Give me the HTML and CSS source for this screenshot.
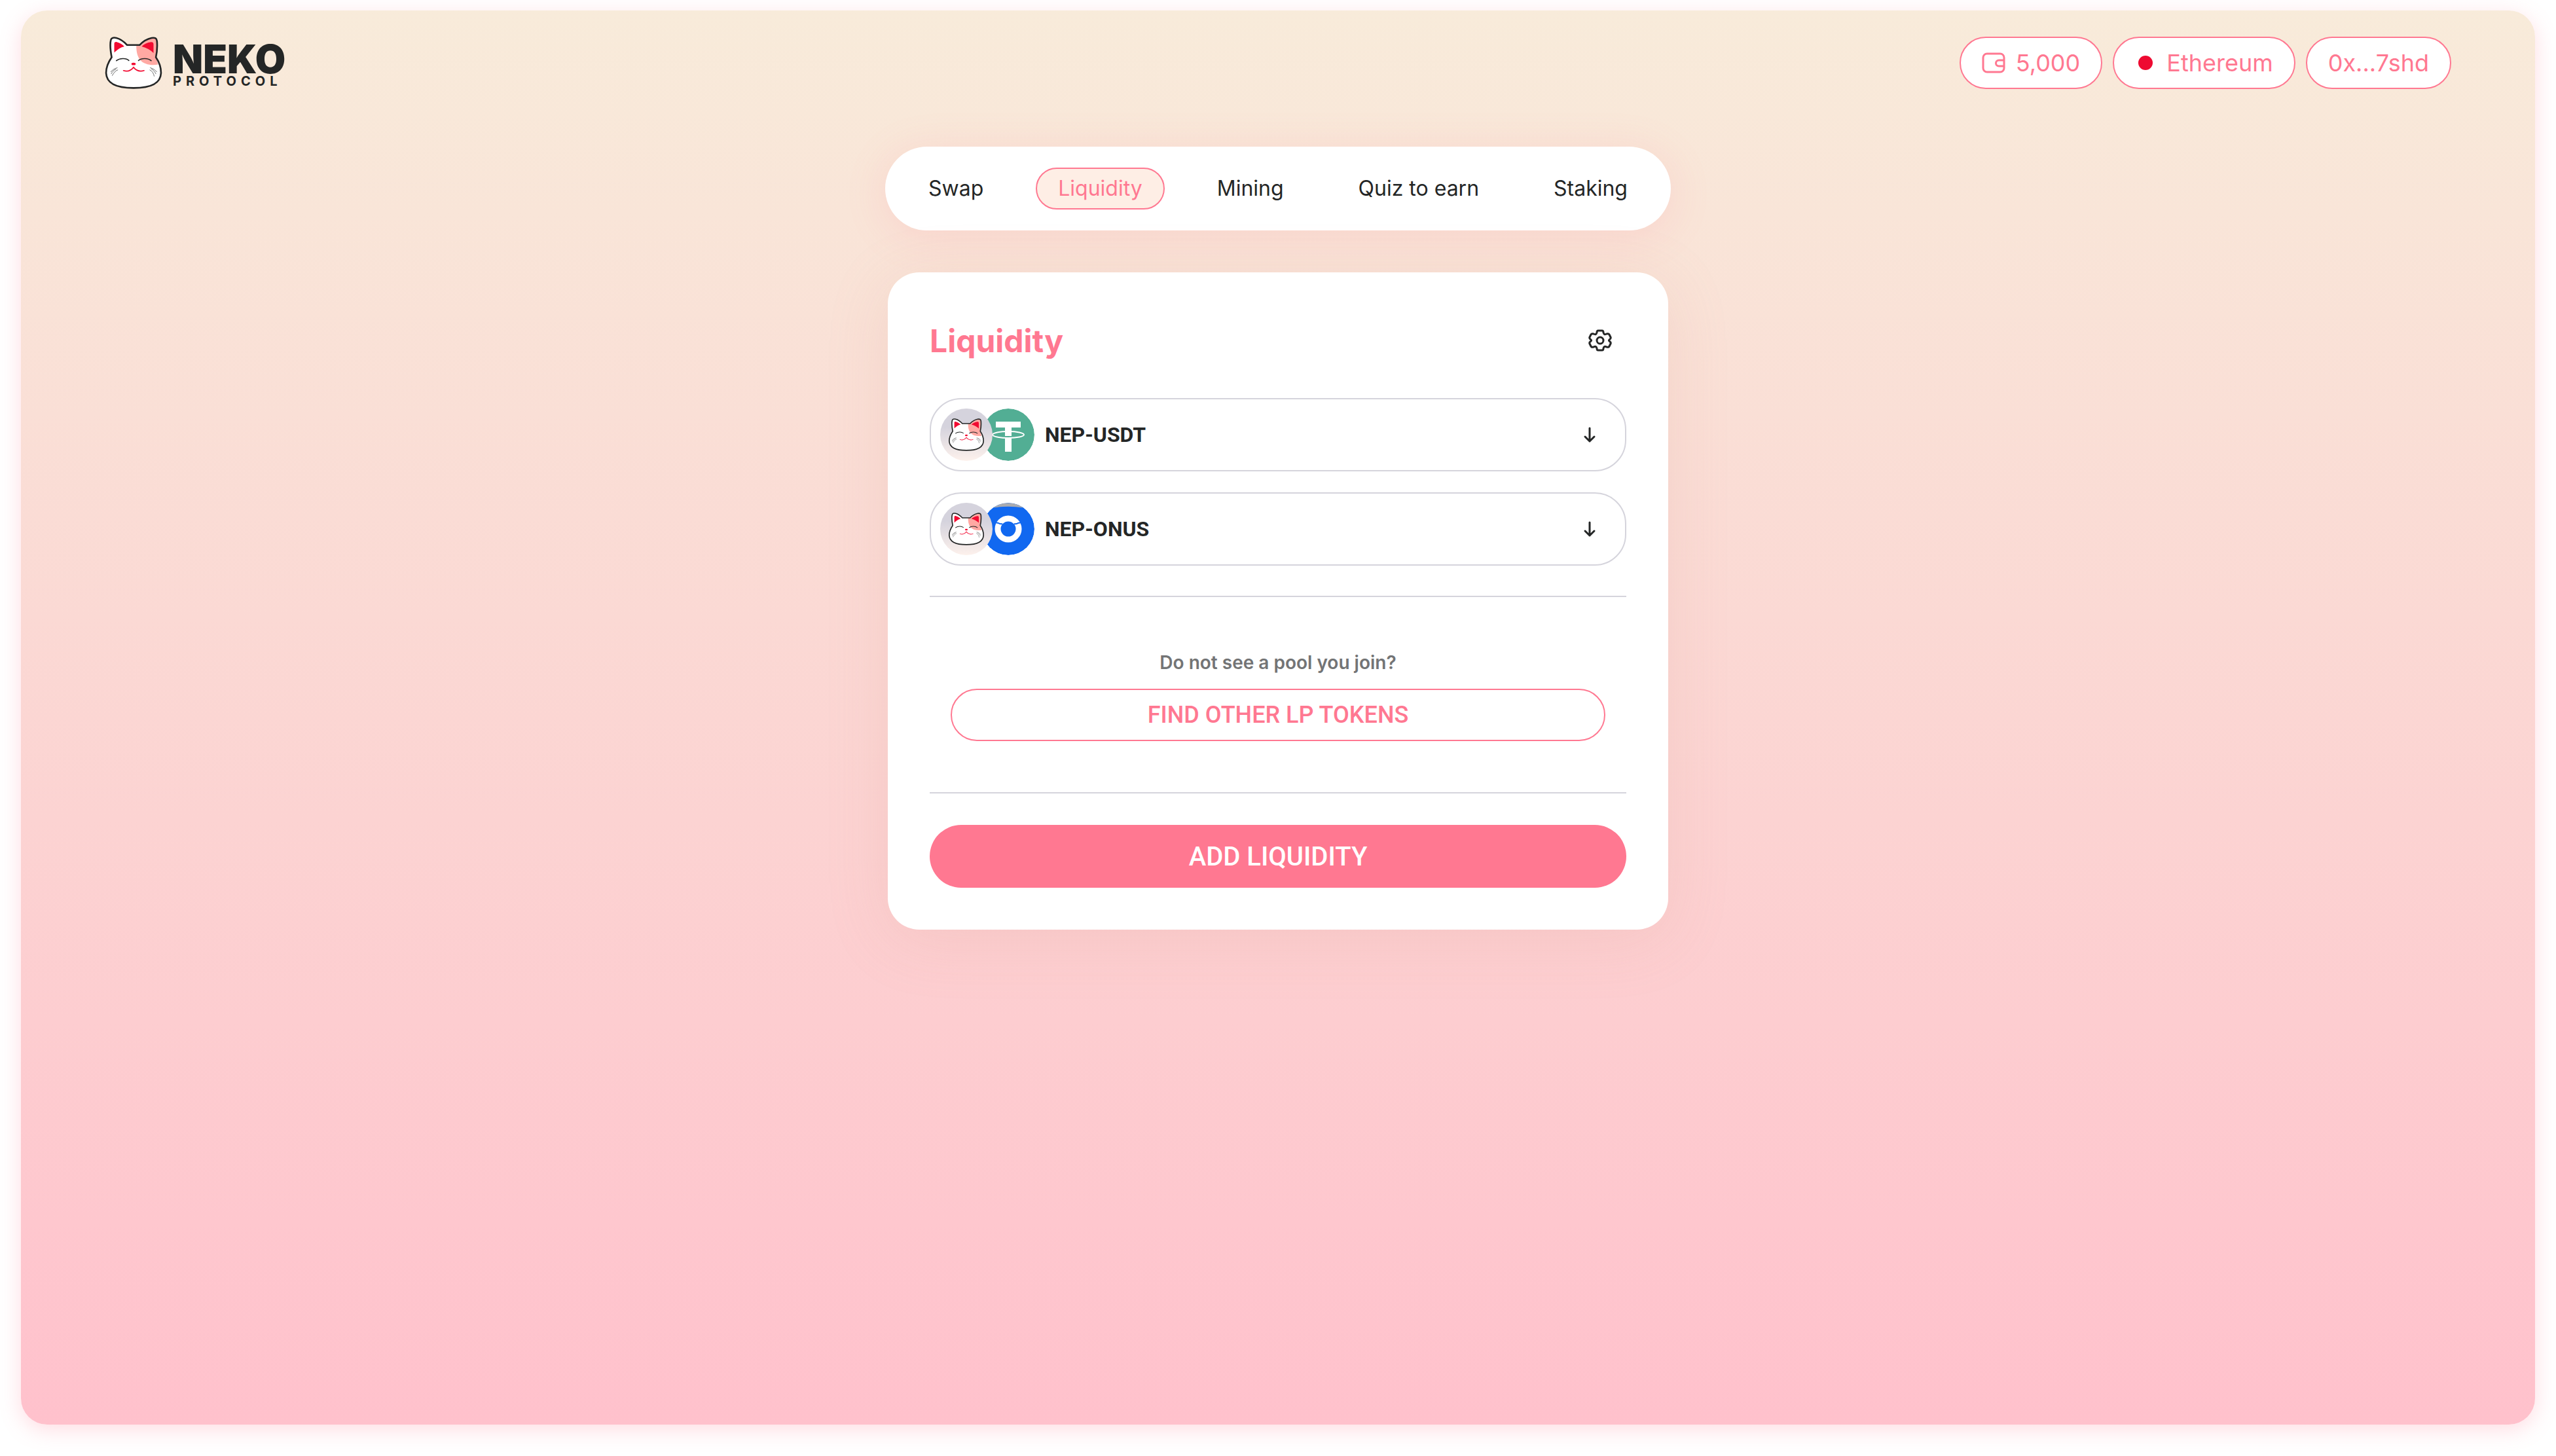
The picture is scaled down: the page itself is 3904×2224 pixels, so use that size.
FILE: index.html
```html
<!DOCTYPE html>
<html lang="en">
<head>
  <meta charset="UTF-8"/>
  <meta name="viewport" content="width=device-width, initial-scale=1.0"/>
  <title>Neko Protocol - Liquidity</title>
  <link rel="stylesheet" href="styles.css">
</head>
<body>
  <!-- Shared shapes -->
  <svg class="sprite" aria-hidden="true">
    <symbol id="cat" viewBox="88 76 264 244">
      <path d="M118 172C112 140 110 110 114 92C116 81 126 79 140 82C158 86 174 98 190 115H248C264 98 284 86 304 82C320 79 328 84 329 96C331 120 329 150 324 172C340 195 348 220 348 245C346 290 310 315 220 315C130 315 94 290 92 245C92 218 102 195 118 172Z" fill="#fff"/>
      <path d="M233 115H248C264 98 284 86 304 82C320 79 328 84 329 96C331 120 329 150 324 172L334 206C300 212 268 204 250 184C236 165 232 140 233 115Z" fill="#ffa9a3"/>
      <path d="M130 150V110C130 102 134 100 142 101C158 105 168 112 177 122C160 126 146 136 130 150Z" fill="#f20a31"/>
      <path d="M313 152C300 138 280 128 258 122C268 110 284 103 302 101C310 101 313 104 313 112Z" fill="#f20a31"/>
      <path d="M118 172C112 140 110 110 114 92C116 81 126 79 140 82C158 86 174 98 190 115H248C264 98 284 86 304 82C320 79 328 84 329 96C331 120 329 150 324 172C340 195 348 220 348 245C346 290 310 315 220 315C130 315 94 290 92 245C92 218 102 195 118 172Z" fill="none" stroke="#242626" stroke-width="8"/>
      <g fill="none" stroke="#242626" stroke-linecap="round">
        <path stroke-width="5" d="M140 188C155 176 185 174 198 187M243 187C258 174 288 176 302 188"/>
        <path stroke-width="2" d="M144 221C131 224 121 232 114 240M146 231C135 235 126 246 121 257M138 227C128 232 121 239 116 249M298 221C311 224 321 232 328 240M296 231C306 235 314 247 316 260M304 227C313 232 319 240 324 249"/>
      </g>
      <ellipse cx="220" cy="203" rx="10" ry="6" fill="#f20a31"/>
      <path d="M173 234C190 240 208 234 220 219C232 234 250 240 269 234" fill="none" stroke="#f20a31" stroke-width="5" stroke-linecap="round"/>
    </symbol>
    <symbol id="arrow-down" viewBox="0 0 32 32">
      <path d="M16 6V26M9 19L16 26L23 19" fill="none" stroke="#242626" stroke-width="3" stroke-linecap="round" stroke-linejoin="round"/>
    </symbol>
  </svg>

  <div class="panel">
    <header>
      <a class="logo" href="#">
        <svg class="logo-cat"><use href="#cat"/></svg>
        <span class="logo-name">
          <span class="neko">NEKO</span>
          <span class="protocol">PROTOCOL</span>
        </span>
      </a>
      <div class="wallet">
        <button class="chip">
          <svg width="36" height="36" viewBox="0 0 36 36" fill="none" stroke="#ff7891" stroke-width="3">
            <rect x="2" y="4" width="32" height="28" rx="6"/>
            <path d="M34 14H26A4 4 0 0 0 26 23H34"/>
          </svg>
          5,000
        </button>
        <button class="chip">
          <svg width="32" height="32" viewBox="0 0 32 32"><circle cx="16" cy="16" r="11" fill="#ee0a31"/></svg>
          Ethereum
        </button>
        <button class="chip">0x...7shd</button>
      </div>
    </header>

    <main>
      <nav class="tabs">
        <a class="tab" href="#">Swap</a>
        <a class="tab active" href="#">Liquidity</a>
        <a class="tab" href="#">Mining</a>
        <a class="tab" href="#">Quiz to earn</a>
        <a class="tab" href="#">Staking</a>
      </nav>

      <section class="card">
        <div class="top-bar">
          <h1>Liquidity</h1>
          <button class="settings" aria-label="Settings">
            <svg width="40" height="40" viewBox="0 0 40 40" fill="none" stroke="#242626" stroke-width="3" stroke-linejoin="round">
              <path d="M17 5H23Q25 5 25 8Q26 12 30 10Q33 9 34 11L36 15Q37 17 34 19Q33 20 34 21Q37 23 36 25L34 29Q33 31 30 30Q26 28 25 32Q25 35 23 35H17Q15 35 15 32Q14 28 10 30Q7 31 6 29L4 25Q3 23 6 21Q7 20 6 19Q3 17 4 15L6 11Q7 9 10 10Q14 12 15 8Q15 5 17 5Z"/>
              <circle cx="20" cy="20" r="5"/>
            </svg>
          </button>
        </div>

        <div class="pools">
          <button class="pool">
            <span class="coins">
              <span class="coin neko-coin"><svg><use href="#cat"/></svg></span>
              <svg class="coin" viewBox="0 0 80 80">
                <circle cx="40" cy="40" r="40" fill="#52ae94"/>
                <path d="M21 20H59V29H45V66H35V29H21Z" fill="#fff"/>
                <path d="M35 43H45" stroke="#52ae94" stroke-width="2"/>
                <ellipse cx="40" cy="40" rx="24" ry="5" fill="none" stroke="#fff" stroke-width="2"/>
              </svg>
            </span>
            <span class="pool-name">NEP-USDT</span>
            <svg class="arrow"><use href="#arrow-down"/></svg>
          </button>
          <button class="pool">
            <span class="coins">
              <span class="coin neko-coin"><svg><use href="#cat"/></svg></span>
              <svg class="coin" viewBox="0 0 80 80">
                <circle cx="40" cy="40" r="40" fill="#1168f0"/>
                <path d="M17 7.5Q40 4 63 7.5A40 40 0 0 0 17 7.5Z" fill="#a9abb0"/>
                <circle cx="40" cy="40" r="16" fill="none" stroke="#fff" stroke-width="9"/>
                <path d="M20 30L25 31Q28 33 31 32M60 30L55 31Q52 33 49 32" fill="none" stroke="#1168f0" stroke-width="2"/>
              </svg>
            </span>
            <span class="pool-name">NEP-ONUS</span>
            <svg class="arrow"><use href="#arrow-down"/></svg>
          </button>
        </div>

        <div class="other">
          <p>Do not see a pool you join?</p>
          <button class="find-button">FIND OTHER LP TOKENS</button>
        </div>

        <button class="add-button">ADD LIQUIDITY</button>
      </section>
    </main>
  </div>
</body>
</html>
```
FILE: styles.css
```css
* {
  box-sizing: border-box;
}

body {
  font-family: Inter, sans-serif;
  color: #242626;
  background-color: #fff;
  margin: 0;
  padding: 16px 32px 48px;
}

button {
  font-family: inherit;
  color: inherit;
  background: none;
  border: none;
  padding: 0;
  cursor: pointer;
}

svg {
  display: block;
  flex-shrink: 0;
}

.sprite {
  position: absolute;
  width: 0;
  height: 0;
}

.panel {
  min-height: calc(100vh - 64px);
  padding-bottom: 64px;
  border-radius: 40px;
  background: linear-gradient(#f8ebda, #ffc1cc);
  box-shadow: 0 8px 32px rgba(255, 120, 145, 0.25);
}

header {
  display: flex;
  justify-content: space-between;
  align-items: center;
  height: 160px;
  padding: 0 128px;
}

.logo {
  display: flex;
  align-items: center;
  gap: 16px;
  color: inherit;
  text-decoration: none;
}

.logo-cat {
  width: 88px;
  height: 80px;
}

.logo-name {
  display: flex;
  flex-direction: column;
  padding-top: 8px;
}

.neko {
  font-size: 60px;
  font-weight: 900;
  line-height: 48px;
}

.protocol {
  font-size: 20px;
  font-weight: 700;
  line-height: 20px;
  letter-spacing: 7px;
}

.wallet {
  display: flex;
  gap: 16px;
}

.chip {
  display: flex;
  align-items: center;
  gap: 16px;
  height: 80px;
  padding: 0 32px;
  border: 2px solid #ff7891;
  border-radius: 40px;
  background-color: #fff;
  color: #ff7891;
  font-size: 36px;
}

main {
  display: flex;
  flex-direction: column;
  align-items: center;
  gap: 64px;
  padding-top: 48px;
}

.tabs {
  display: flex;
  justify-content: space-between;
  width: 100%;
  max-width: 1200px;
  padding: 32px;
  border-radius: 64px;
  background-color: #fff;
  box-shadow: 0 8px 64px rgba(255, 120, 145, 0.16);
}

.tab {
  padding: 0 32px;
  border: 2px solid transparent;
  border-radius: 32px;
  color: inherit;
  font-size: 32px;
  line-height: 60px;
  text-decoration: none;
}

.tab.active {
  border-color: #ff7891;
  background-color: #feeee5;
  color: #ff7891;
}

.card {
  display: flex;
  flex-direction: column;
  gap: 48px;
  width: 100%;
  max-width: 1192px;
  padding: 64px;
  border-radius: 48px;
  background-color: #fff;
  box-shadow: 0 16px 96px rgba(210, 140, 130, 0.16);
}

.top-bar {
  display: flex;
  justify-content: space-between;
  align-items: center;
}

h1 {
  margin: 0;
  color: #ff7891;
  font-size: 48px;
  font-weight: 700;
}

.settings {
  display: flex;
  align-items: center;
  justify-content: center;
  width: 80px;
  height: 80px;
}

.pools {
  display: flex;
  flex-direction: column;
  gap: 32px;
  margin-bottom: -2px;
}

.pool {
  display: flex;
  align-items: center;
  gap: 16px;
  height: 112px;
  padding: 0 38px 0 14px;
  border: 2px solid #d5d4dc;
  border-radius: 48px;
}

.coins {
  display: flex;
}

.coin {
  width: 80px;
  height: 80px;
  border-radius: 50%;
}

.coin + .coin {
  margin-left: -16px;
}

.neko-coin {
  display: flex;
  align-items: center;
  justify-content: center;
  position: relative;
  z-index: 1;
  background: linear-gradient(#d5d3dd 35%, #fdf1ec);
}

.neko-coin svg {
  width: 54px;
  height: 50px;
}

.pool-name {
  flex: 1;
  text-align: left;
  font-family: Roboto, sans-serif;
  font-size: 32px;
  font-weight: 700;
}

.arrow {
  width: 32px;
  height: 32px;
}

.other {
  display: flex;
  flex-direction: column;
  gap: 22px;
  padding: 82px 32px 78px;
  border-top: 2px solid #d5d4dc;
  border-bottom: 2px solid #d5d4dc;
}

.other p {
  margin: 0;
  color: #737475;
  font-size: 28px;
  font-weight: 600;
  line-height: 36px;
  text-align: center;
}

.find-button,
.add-button {
  font-family: Roboto, sans-serif;
  font-size: 36px;
  font-weight: 500;
}

.find-button {
  height: 80px;
  border: 2px solid #ff7891;
  border-radius: 40px;
  color: #ff7891;
}

.add-button {
  height: 96px;
  border-radius: 48px;
  background-color: #ff7891;
  color: #fff;
  font-size: 40px;
}
```
